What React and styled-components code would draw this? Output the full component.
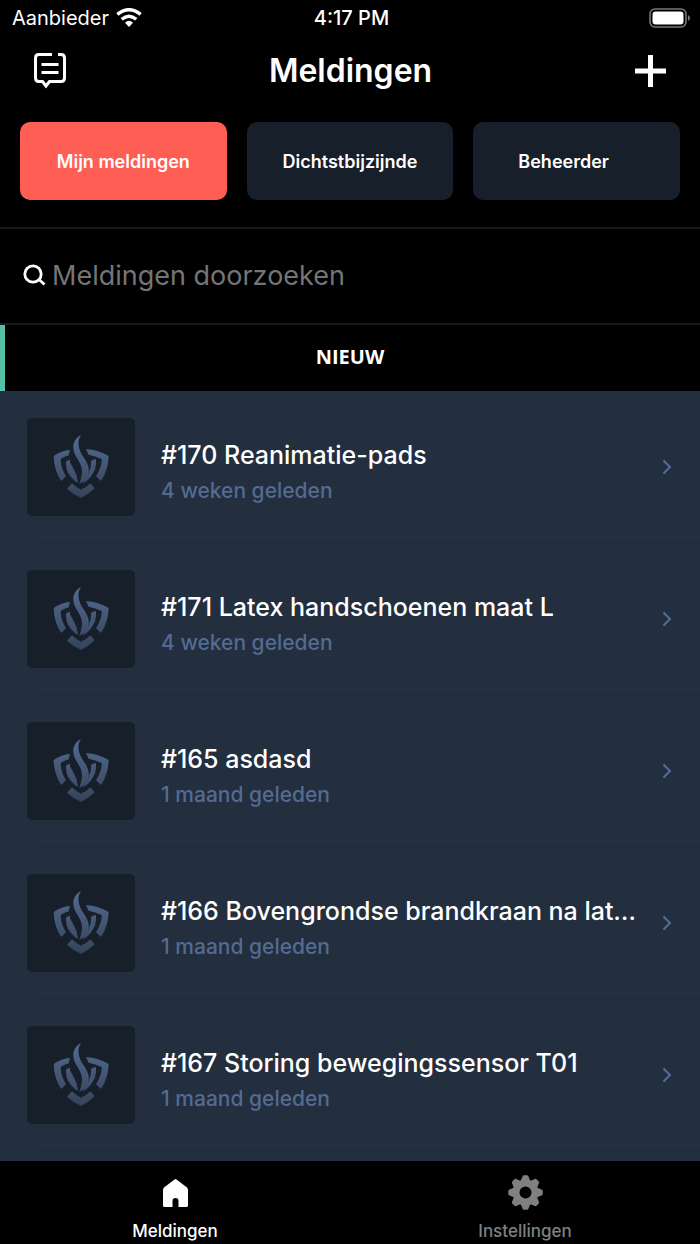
import { useId, useState } from "react";
import styled, { createGlobalStyle } from "styled-components";

const GlobalStyle = createGlobalStyle`
  * {
    box-sizing: border-box;
  }
  body {
    margin: 0;
    background: #000000;
    color: #ffffff;
    font-family: Inter, "Liberation Sans", sans-serif;
  }
  button, input {
    font-family: inherit;
    color: inherit;
  }
`;

const Screen = styled.div`
  display: flex;
  flex-direction: column;
  height: 100vh;
`;

const StatusBar = styled.div`
  display: grid;
  grid-template-columns: 1fr auto 1fr;
  align-items: center;
  height: 36px;
  padding: 0 9px 0 12px;
  font-size: 20px;
`;

const Carrier = styled.span`
  display: flex;
  align-items: center;
  gap: 7px;
`;

const Clock = styled.time`
  font-size: 20px;
  font-weight: 500;
`;

const Battery = styled.svg`
  justify-self: end;
`;

const Header = styled.header`
  display: flex;
  align-items: center;
  justify-content: space-between;
  height: 70px;
  padding: 0 34px;
`;

const Title = styled.h1`
  margin: 0;
  font-size: 32px;
  line-height: 40px;
  font-weight: 600;
`;

const IconButton = styled.button`
  display: flex;
  padding: 0;
  border: 0;
  background: none;
  cursor: pointer;
`;

const Filters = styled.div`
  display: grid;
  grid-template-columns: repeat(3, 1fr);
  gap: 20px;
  padding: 16px 20px 27px;
  border-bottom: 2px solid #141b24;
`;

const FilterButton = styled.button`
  height: 78px;
  padding: 0 ${(props) => (props.$badgeSpace ? "26px" : "0")} 0 0;
  border: 0;
  border-radius: 10px;
  background: ${(props) => (props.$active ? "#ff5e55" : "#171f2a")};
  font-size: 18px;
  font-weight: 600;
  cursor: pointer;
`;

const SearchBar = styled.label`
  display: flex;
  flex-shrink: 0;
  align-items: center;
  gap: 6px;
  height: 96px;
  padding: 0 23px;
  border-bottom: 2px solid #141b24;
`;

const SearchInput = styled.input`
  flex: 1;
  min-width: 0;
  padding: 0;
  border: 0;
  outline: 0;
  background: none;
  font-size: 27px;
  line-height: 36px;

  &::placeholder {
    color: #757575;
    opacity: 1;
  }
`;

const SectionTitle = styled.h2`
  flex-shrink: 0;
  margin: 0;
  border-left: 5px solid #55c0a8;
  padding: 0 5px 2px 0;
  font-family: "Open Sans", sans-serif;
  font-size: 20px;
  line-height: 64px;
  font-weight: 700;
  text-align: center;
`;

const List = styled.ul`
  flex: 1;
  min-height: 0;
  margin: 0;
  padding: 0;
  overflow: hidden;
  list-style: none;
  background: #232e3e;
`;

const Row = styled.li`
  display: flex;
  align-items: center;
  gap: 16px;
  height: 152px;
  padding: 0 28px 0 27px;
  background: linear-gradient(#1f2937, #1f2937) 34px 100% / 100% 1px no-repeat;
`;

const Thumb = styled.div`
  display: flex;
  flex-shrink: 0;
  align-items: center;
  justify-content: center;
  width: 108px;
  height: 98px;
  margin-right: 10px;
  padding-bottom: 2px;
  border-radius: 5px;
  background: #171f2a;
`;

const RowText = styled.div`
  flex: 1;
  min-width: 0;
  padding-top: 11px;
`;

const RowTitle = styled.div`
  overflow: hidden;
  font-size: 25px;
  font-weight: 500;
  line-height: 36px;
  white-space: nowrap;
  text-overflow: ellipsis;
`;

const RowTime = styled.div`
  color: #536b91;
  font-size: 21px;
  font-weight: 500;
  line-height: 36px;
`;

const TabBar = styled.nav`
  display: grid;
  flex-shrink: 0;
  grid-template-columns: 1fr 1fr;
  height: 83px;
`;

const Tab = styled.a`
  display: flex;
  flex-direction: column;
  align-items: center;
  gap: 9px;
  padding-top: 14px;
  color: ${(props) => (props.$active ? "#ffffff" : "#808080")};
  font-size: 17px;
  font-weight: 500;
  line-height: 24px;
  text-decoration: none;
`;

const WifiIcon = () => (
  <svg width="26" height="20" viewBox="0 0 78 60" aria-hidden="true">
    <g fill="none" stroke="#fff" strokeWidth="10">
      <path d="M4 19Q39 -9 74 19" />
      <path d="M17 34Q39 15 61 34" />
    </g>
    <path fill="#fff" d="M27 44Q39 33 51 44L39 57Z" />
  </svg>
);

const BatteryIcon = () => (
  <Battery width="42" height="20" viewBox="0 0 42 20" role="img" aria-label="Batterij">
    <rect x="1" y="1" width="36" height="18" rx="5" fill="none" stroke="#777" strokeWidth="1.6" />
    <rect x="3.5" y="3.5" width="31" height="13" rx="3" fill="#fff" />
    <path d="M39 7Q41 8 41 10T39 13Z" fill="#777" />
  </Battery>
);

const NoteIcon = () => (
  <svg width="32" height="36" viewBox="0 0 32 36" aria-hidden="true">
    <g fill="none" stroke="#fff" strokeWidth="3">
      <path d="M18 1.5H5Q1.5 1.5 1.5 5V25Q1.5 28.5 5 28.5H8.5L12 33L15.5 28.5H27Q30.5 28.5 30.5 25V5Q30.5 1.5 27 1.5H24" />
      <path d="M7.500 11.5H24.5M7.5 19.5H24.5" />
    </g>
  </svg>
);

const PlusIcon = () => (
  <svg width="31" height="32" viewBox="0 0 31 32" aria-hidden="true">
    <path d="M0 16H31M15.5 0V32" stroke="#fff" strokeWidth="5" />
  </svg>
);

const SearchIcon = () => (
  <svg width="23" height="24" viewBox="0 0 23 24" aria-hidden="true">
    <g fill="none" stroke="#fff" strokeWidth="2.8">
      <circle cx="10" cy="10" r="8.2" />
      <path d="M15.5 15L21.5 20.500" />
    </g>
  </svg>
);

const ChevronIcon = () => (
  <svg width="10" height="16" viewBox="0 0 10 16" aria-hidden="true">
    <path d="M1.5 1.5L8 8L1.5 14.5" fill="none" stroke="#536b91" strokeWidth="2.2" />
  </svg>
);

const HomeIcon = () => (
  <svg width="25" height="35" viewBox="0 0 25 35" aria-hidden="true">
    <path
      fill="currentColor"
      d="M11.5 4.500Q12.5 3.5 13.5 4.5L24 12.5Q25 13.500 25 15V30.5Q25 32 23.5 32H15.5V26Q15.5 23 12.5 23T9.5 26V32H1.5Q0 32 0 30.5V15Q0 13.5 1 12.5Z"
    />
  </svg>
);

const GearIcon = () => (
  <svg width="35" height="35" viewBox="-17.5 -17.5 35 35" aria-hidden="true">
    <circle r="9.5" fill="none" stroke="currentColor" strokeWidth="7" />
    {[0, 45, 90, 135, 180, 225, 270, 315].map((angle) => (
      <path
        key={angle}
        d="M-5 -11L-3 -16Q-2.7 -17.2 -1.5 -17.2H1.5Q2.7 -17.2 3 -16L5 -11Z"
        fill="currentColor"
        transform={`rotate(${angle})`}
      />
    ))}
  </svg>
);

const ShieldLogo = () => {
  const id = useId();
  return (
    <svg width="56" height="64" viewBox="100 70 168 192" aria-hidden="true">
      <defs>
        <linearGradient id={id} gradientUnits="userSpaceOnUse" x1="0" y1="70" x2="0" y2="262">
          <stop offset="0" stopColor="#536b91" />
          <stop offset="1" stopColor="#344359" />
        </linearGradient>
      </defs>
      <g fill={`url(#${id})`}>
        <path d="M151 118Q126 120 102 136Q103 180 125 211L139 197Q124 174 123 145Q135 138 147 134Z" />
        <path d="M199 115Q238 118 267 136Q266 178 244 211L229 197Q244 174 247 146Q226 136 207 132Z" />
        <path d="M184 72C168 82 159 96 161 112C163 137 182 151 186 172C189 191 184 205 179 219Q194 214 203 197C213 177 205 158 191 138C177 118 170 94 184 72Z" />
        <path d="M139 153L149 146C153 169 172 180 175 217C153 202 137 182 139 153Z" />
        <path d="M215 149L229 145Q232 177 211 201Q202 212 187 219Q200 204 207 187Q215 170 215 149Z" />
        <path d="M157 218Q170 231 184 237Q200 231 212 218L225 233Q207 251 184 262Q161 252 142 234Z" />
      </g>
    </svg>
  );
};

const filters = [
  { name: "Mijn meldingen" },
  { name: "Dichtstbijzijnde" },
  { name: "Beheerder", badgeSpace: true },
];

const reports = [
  { title: "#170 Reanimatie-pads", time: "4 weken geleden" },
  { title: "#171 Latex handschoenen maat L", time: "4 weken geleden" },
  { title: "#165 asdasd", time: "1 maand geleden" },
  { title: "#166 Bovengrondse brandkraan na latere controle", time: "1 maand geleden" },
  { title: "#167 Storing bewegingssensor T01", time: "1 maand geleden" },
];

export default function App() {
  const [filter, setFilter] = useState(filters[0].name);

  return (
    <Screen>
      <GlobalStyle />
      <StatusBar>
        <Carrier>
          Aanbieder
          <WifiIcon />
        </Carrier>
        <Clock>4:17 PM</Clock>
        <BatteryIcon />
      </StatusBar>
      <Header>
        <IconButton aria-label="Notities">
          <NoteIcon />
        </IconButton>
        <Title>Meldingen</Title>
        <IconButton aria-label="Nieuwe melding">
          <PlusIcon />
        </IconButton>
      </Header>
      <Filters>
        {filters.map(({ name, badgeSpace }) => (
          <FilterButton
            key={name}
            $active={name === filter}
            $badgeSpace={badgeSpace}
            onClick={() => setFilter(name)}
          >
            {name}
          </FilterButton>
        ))}
      </Filters>
      <SearchBar>
        <SearchIcon />
        <SearchInput type="search" placeholder="Meldingen doorzoeken" aria-label="Meldingen doorzoeken" />
      </SearchBar>
      <SectionTitle>NIEUW</SectionTitle>
      <List>
        {reports.map((report) => (
          <Row key={report.title}>
            <Thumb>
              <ShieldLogo />
            </Thumb>
            <RowText>
              <RowTitle>{report.title}</RowTitle>
              <RowTime>{report.time}</RowTime>
            </RowText>
            <ChevronIcon />
          </Row>
        ))}
      </List>
      <TabBar>
        <Tab href="#meldingen" $active>
          <HomeIcon />
          Meldingen
        </Tab>
        <Tab href="#instellingen">
          <GearIcon />
          Instellingen
        </Tab>
      </TabBar>
    </Screen>
  );
}
